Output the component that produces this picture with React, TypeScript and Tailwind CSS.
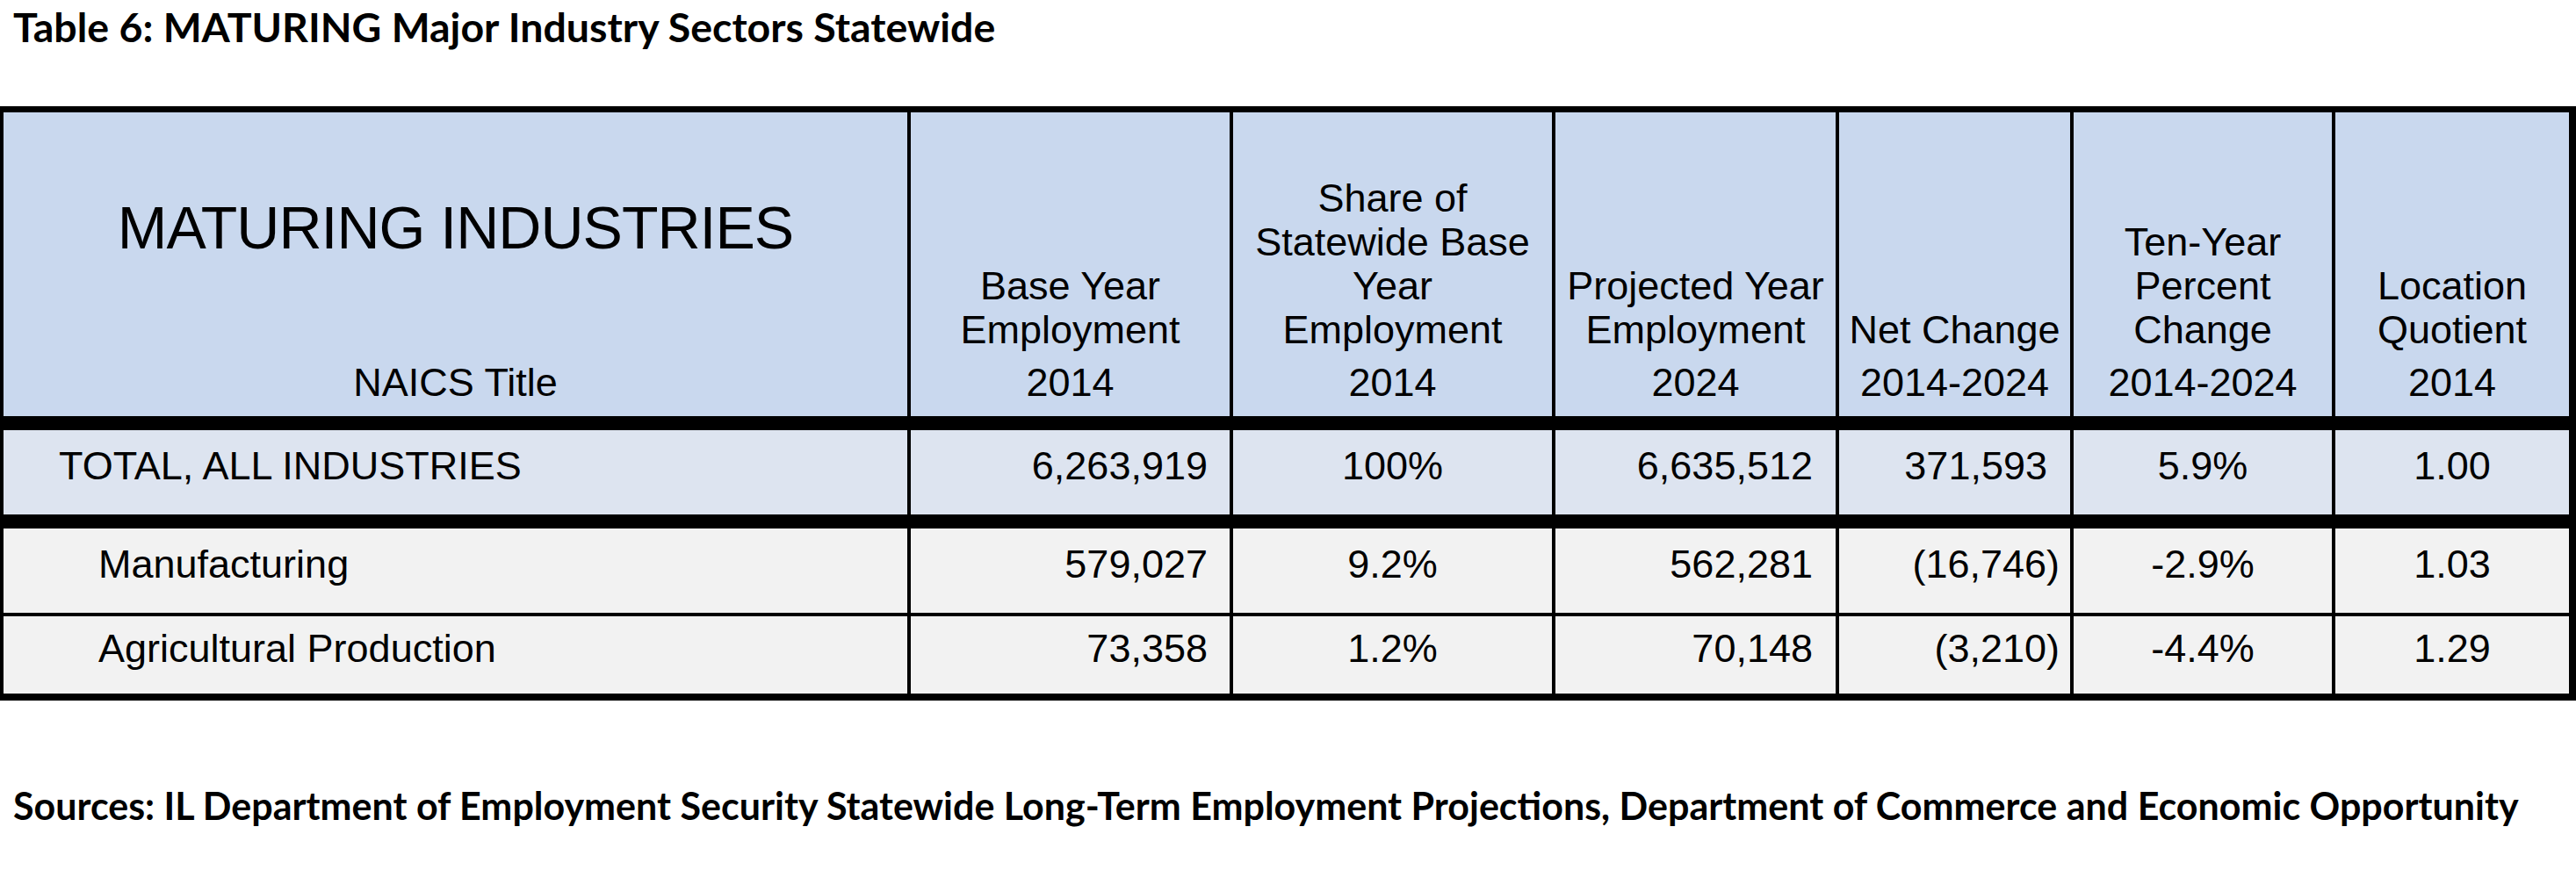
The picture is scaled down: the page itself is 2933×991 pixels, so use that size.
import React from 'react';

type Row = {
  title: string;
  base: string;
  share: string;
  projected: string;
  net: string;
  pct: string;
  lq: string;
};

const total: Row = {
  title: 'TOTAL, ALL INDUSTRIES',
  base: '6,263,919',
  share: '100%',
  projected: '6,635,512',
  net: '371,593',
  pct: '5.9%',
  lq: '1.00',
};

const sectors: Row[] = [
  {
    title: 'Manufacturing',
    base: '579,027',
    share: '9.2%',
    projected: '562,281',
    net: '(16,746)',
    pct: '-2.9%',
    lq: '1.03',
  },
  {
    title: 'Agricultural Production',
    base: '73,358',
    share: '1.2%',
    projected: '70,148',
    net: '(3,210)',
    pct: '-4.4%',
    lq: '1.29',
  },
];

const gridCols = 'grid grid-cols-[1029px_363px_363px_319px_263px_294px_266px] gap-x-[4px]';

const HeaderCell = ({ lines, year }: { lines: string[]; year: string }) => (
  <div className="flex flex-col items-center justify-end bg-[#c9d8ee] pb-[13px] text-center leading-[50px]">
    {lines.map((line) => (
      <div key={line} className="whitespace-nowrap">
        {line}
      </div>
    ))}
    <div className="mt-[10px]">{year}</div>
  </div>
);

const DataRow = ({ row, bg, height, indent }: { row: Row; bg: string; height: string; indent: string }) => {
  const cell = `flex items-center pb-[15px] whitespace-nowrap ${bg}`;
  const isNegative = row.net.startsWith('(');
  return (
    <div className={`${gridCols} ${height}`}>
      <div className={`${cell} ${indent}`}>{row.title}</div>
      <div className={`${cell} justify-end pr-[25px]`}>{row.base}</div>
      <div className={`${cell} justify-center`}>{row.share}</div>
      <div className={`${cell} justify-end pr-[26px]`}>{row.projected}</div>
      <div className={`${cell} justify-end ${isNegative ? 'pr-[12px]' : 'pr-[26px]'}`}>{row.net}</div>
      <div className={`${cell} justify-center`}>{row.pct}</div>
      <div className={`${cell} justify-center`}>{row.lq}</div>
    </div>
  );
};

export default function App() {
  return (
    <div className="h-[991px] w-[2933px] bg-white text-black">
      {/* Caption */}
      <div className="h-[121px] pl-[15px] pt-[3px] font-['Lato',sans-serif] text-[46.5px] font-bold leading-[1.2]">
        Table 6: MATURING Major Industry Sectors Statewide
      </div>

      {/* Table */}
      <div className="bg-black pb-[8px] pl-[4px] pr-[8px] pt-[7px] font-['Liberation_Sans',Arial,sans-serif] text-[45px] leading-[50px]">
        <div className={`${gridCols} h-[346px]`}>
          <div className="flex flex-col items-center justify-between bg-[#c9d8ee] pb-[13px] pt-[92px]">
            <div className="text-[68px] leading-[78px] tracking-[-1px]">MATURING INDUSTRIES</div>
            <div>NAICS Title</div>
          </div>
          <HeaderCell lines={['Base Year', 'Employment']} year="2014" />
          <HeaderCell lines={['Share of', 'Statewide Base', 'Year', 'Employment']} year="2014" />
          <HeaderCell lines={['Projected Year', 'Employment']} year="2024" />
          <HeaderCell lines={['Net Change']} year="2014-2024" />
          <HeaderCell lines={['Ten-Year', 'Percent', 'Change']} year="2014-2024" />
          <HeaderCell lines={['Location', 'Quotient']} year="2014" />
        </div>

        <div className="h-[16px]" />
        <DataRow row={total} bg="bg-[#dde4f0]" height="h-[96px]" indent="pl-[63px]" />
        <div className="h-[16px]" />
        <DataRow row={sectors[0]} bg="bg-[#f2f2f2]" height="h-[96px]" indent="pl-[108px]" />
        <div className="h-[4px]" />
        <DataRow row={sectors[1]} bg="bg-[#f2f2f2]" height="h-[88px]" indent="pl-[108px]" />
      </div>

      {/* Source note */}
      <div className="mt-[94px] pl-[15px] font-['Lato',sans-serif] text-[43px] font-bold leading-[1.2] whitespace-nowrap">
        Sources: IL Department of Employment Security Statewide Long-Term Employment Projections, Department of Commerce and Economic Opportunity
      </div>
    </div>
  );
}
